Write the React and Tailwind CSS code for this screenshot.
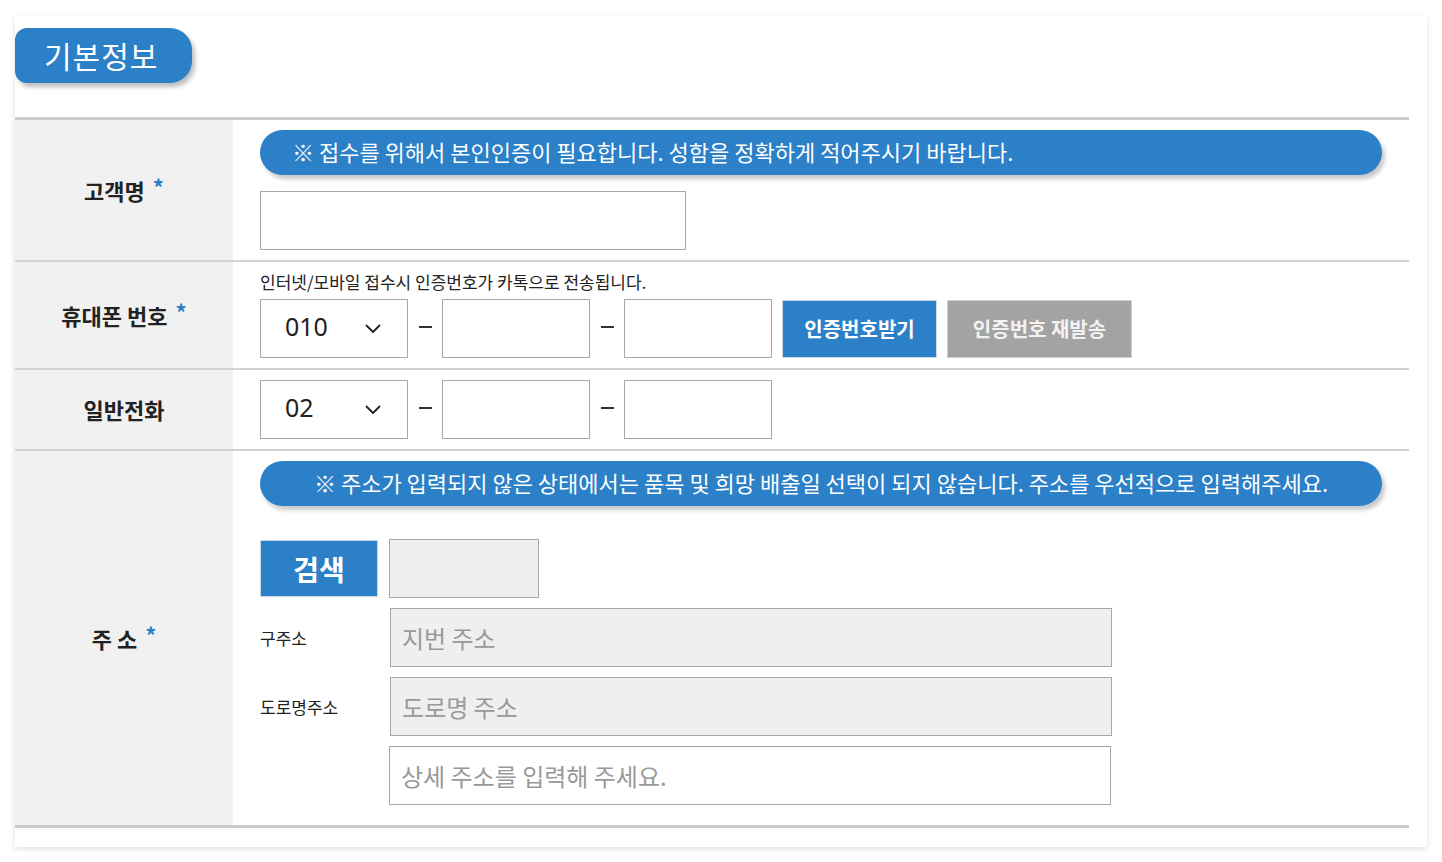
import React from "react";

const FONT = { fontFamily: '"Noto Sans CJK KR", "Noto Sans", sans-serif' };

function Chevron() {
  return (
    <svg width="16" height="10" viewBox="0 0 16 10" fill="none">
      <path d="M1.5 1.5 L8 8 L14.5 1.5" stroke="#222" strokeWidth="1.8" strokeLinecap="round" strokeLinejoin="round" />
    </svg>
  );
}

function SelectBox({ value }) {
  return (
    <div className="w-[148px] h-[59px] border border-[#a8a8a8] bg-white flex items-center pl-[24px] pr-[26px] justify-between">
      <span className="text-[25px] leading-none pb-[4px] text-[#222]" style={{ fontFamily: '"Noto Sans", sans-serif' }}>{value}</span>
      <Chevron />
    </div>
  );
}

function Dash() {
  return <span className="w-[34px] flex justify-center"><span className="block w-[13px] h-[2px] bg-[#333] relative top-[-2px]" /></span>;
}

function Box() {
  return <div className="w-[148px] h-[59px] border border-[#a8a8a8] bg-white" />;
}

function PhoneRow({ value }) {
  return (
    <div className="flex items-center">
      <SelectBox value={value} />
      <Dash />
      <Box />
      <Dash />
      <Box />
    </div>
  );
}

function Label({ children, star }) {
  return (
    <div className="bg-[#f1f1f1] flex items-center justify-center">
      <span className="text-[22px] font-bold text-[#222]">
        {children}
        {star && <span className="text-[#2b80c8] ml-[8px] relative top-[-4px]">*</span>}
      </span>
    </div>
  );
}

export default function App() {
  return (
    <div className="min-h-screen bg-white p-[15px]" style={FONT}>
      <div className="bg-white shadow-[0_2px_6px_rgba(0,0,0,0.12)] pt-[13px] pr-[18px] pb-[19px]">
        <div className="w-[177px] h-[55px] bg-[#2b80c8] rounded-l-[12px] rounded-r-[22px] shadow-[3px_4px_4px_rgba(0,0,0,0.25)] flex items-center pl-[29px]">
          <span className="text-white text-[30px] font-normal tracking-[1px]">기본정보</span>
        </div>

        <div className="mt-[34px] border-t-[3px] border-[#cccccc]">
          {/* Row 1 */}
          <div className="grid grid-cols-[218px_1fr] border-b-2 border-[#d3d3d3]">
            <Label star>고객명</Label>
            <div className="px-[27px] py-[10px] flex flex-col gap-[16px]">
              <div className="h-[45px] rounded-full bg-[#2b80c8] shadow-[3px_4px_4px_rgba(0,0,0,0.22)] flex items-center pl-[32px]">
                <span className="text-white text-[22px] leading-none pb-[3px]">※ 접수를 위해서 본인인증이 필요합니다. 성함을 정확하게 적어주시기 바랍니다.</span>
              </div>
              <input className="w-[426px] h-[59px] border border-[#a8a8a8] bg-white outline-none" />
            </div>
          </div>

          {/* Row 2 */}
          <div className="grid grid-cols-[218px_1fr] border-b-2 border-[#d3d3d3]">
            <Label star>휴대폰 번호</Label>
            <div className="px-[27px] pt-[8px] pb-[10px] flex flex-col gap-[5px]">
              <div className="text-[17px] leading-[24px] text-[#222]">인터넷/모바일 접수시 인증번호가 카톡으로 전송됩니다.</div>
              <div className="flex items-center">
                <PhoneRow value="010" />
                <div className="ml-[10px] w-[155px] h-[58px] bg-[#2b80c8] border border-[#c9d9ea] flex items-center justify-center text-white font-bold text-[20px]">인증번호받기</div>
                <div className="ml-[10px] w-[185px] h-[58px] bg-[#a3a3a3] border border-[#cfcfcf] flex items-center justify-center text-[#f2f2f2] font-bold text-[20px]">인증번호 재발송</div>
              </div>
            </div>
          </div>

          {/* Row 3 */}
          <div className="grid grid-cols-[218px_1fr] border-b-2 border-[#d3d3d3]">
            <Label>일반전화</Label>
            <div className="px-[27px] py-[10px]">
              <PhoneRow value="02" />
            </div>
          </div>

          {/* Row 4 */}
          <div className="grid grid-cols-[218px_1fr] border-b-[3px] border-[#cccccc]">
            <Label star>주 소</Label>
            <div className="px-[27px] pt-[10px] pb-[20px] flex flex-col">
              <div className="h-[45px] rounded-full bg-[#2b80c8] shadow-[3px_4px_4px_rgba(0,0,0,0.22)] flex items-center justify-center">
                <span className="text-white text-[22px] leading-none pb-[3px]">※ 주소가 입력되지 않은 상태에서는 품목 및 희망 배출일 선택이 되지 않습니다. 주소를 우선적으로 입력해주세요.</span>
              </div>
              <div className="mt-[33px] flex items-center">
                <div className="w-[118px] h-[57px] bg-[#2b80c8] border border-[#c9d9ea] flex items-center justify-center text-white font-bold text-[28px]">검색</div>
                <div className="ml-[11px] w-[150px] h-[59px] bg-[#efefef] border border-[#a8a8a8]" />
              </div>
              <div className="mt-[10px] flex items-center">
                <span className="w-[130px] text-[17px] text-[#222]">구주소</span>
                <input placeholder="지번 주소" readOnly className="w-[722px] h-[59px] border border-[#a8a8a8] bg-[#efefef] pl-[11px] text-[24px] placeholder:text-[#999] outline-none" />
              </div>
              <div className="mt-[10px] flex items-center">
                <span className="w-[130px] text-[17px] text-[#222]">도로명주소</span>
                <input placeholder="도로명 주소" readOnly className="w-[722px] h-[59px] border border-[#a8a8a8] bg-[#efefef] pl-[11px] text-[24px] placeholder:text-[#999] outline-none" />
              </div>
              <div className="mt-[10px] flex items-center">
                <span className="w-[129px]" />
                <input placeholder="상세 주소를 입력해 주세요." className="w-[722px] h-[59px] border border-[#a8a8a8] bg-white pl-[11px] text-[24px] placeholder:text-[#999] outline-none" />
              </div>
            </div>
          </div>
        </div>
      </div>
    </div>
  );
}
